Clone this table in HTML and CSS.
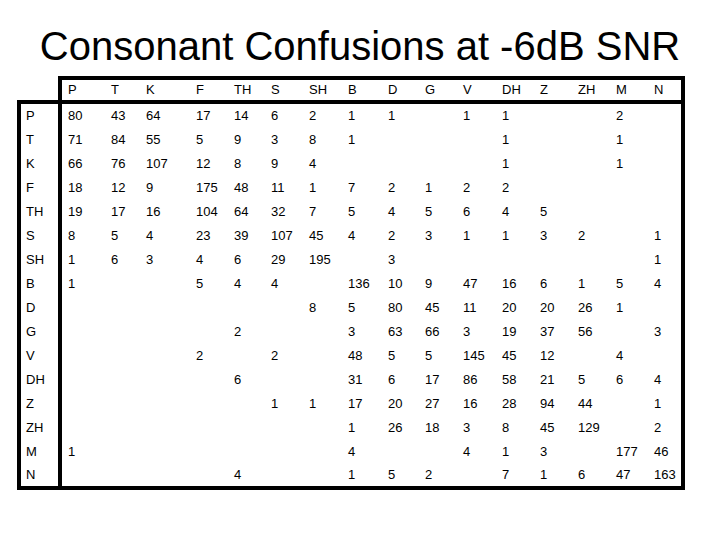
FILE: index.html
```html
<!DOCTYPE html>
<html lang="en">
<head>
<meta charset="utf-8">
<title>Consonant Confusions at -6dB SNR</title>
<link rel="stylesheet" href="styles.css">
</head>
<body>
<h1 class="title">Consonant Confusions at -6dB SNR</h1>
<table class="matrix">
<colgroup>
<col><col><col><col><col><col><col><col><col><col><col><col><col><col><col><col><col>
</colgroup>
<thead>
<tr><th class="corner"></th><th>P</th><th>T</th><th>K</th><th>F</th><th>TH</th><th>S</th><th>SH</th><th>B</th><th>D</th><th>G</th><th>V</th><th>DH</th><th>Z</th><th>ZH</th><th>M</th><th>N</th></tr>
</thead>
<tbody>
<tr><th>P</th><td>80</td><td>43</td><td>64</td><td>17</td><td>14</td><td>6</td><td>2</td><td>1</td><td>1</td><td></td><td>1</td><td>1</td><td></td><td></td><td>2</td><td></td></tr>
<tr><th>T</th><td>71</td><td>84</td><td>55</td><td>5</td><td>9</td><td>3</td><td>8</td><td>1</td><td></td><td></td><td></td><td>1</td><td></td><td></td><td>1</td><td></td></tr>
<tr><th>K</th><td>66</td><td>76</td><td>107</td><td>12</td><td>8</td><td>9</td><td>4</td><td></td><td></td><td></td><td></td><td>1</td><td></td><td></td><td>1</td><td></td></tr>
<tr><th>F</th><td>18</td><td>12</td><td>9</td><td>175</td><td>48</td><td>11</td><td>1</td><td>7</td><td>2</td><td>1</td><td>2</td><td>2</td><td></td><td></td><td></td><td></td></tr>
<tr><th>TH</th><td>19</td><td>17</td><td>16</td><td>104</td><td>64</td><td>32</td><td>7</td><td>5</td><td>4</td><td>5</td><td>6</td><td>4</td><td>5</td><td></td><td></td><td></td></tr>
<tr><th>S</th><td>8</td><td>5</td><td>4</td><td>23</td><td>39</td><td>107</td><td>45</td><td>4</td><td>2</td><td>3</td><td>1</td><td>1</td><td>3</td><td>2</td><td></td><td>1</td></tr>
<tr><th>SH</th><td>1</td><td>6</td><td>3</td><td>4</td><td>6</td><td>29</td><td>195</td><td></td><td>3</td><td></td><td></td><td></td><td></td><td></td><td></td><td>1</td></tr>
<tr><th>B</th><td>1</td><td></td><td></td><td>5</td><td>4</td><td>4</td><td></td><td>136</td><td>10</td><td>9</td><td>47</td><td>16</td><td>6</td><td>1</td><td>5</td><td>4</td></tr>
<tr><th>D</th><td></td><td></td><td></td><td></td><td></td><td></td><td>8</td><td>5</td><td>80</td><td>45</td><td>11</td><td>20</td><td>20</td><td>26</td><td>1</td><td></td></tr>
<tr><th>G</th><td></td><td></td><td></td><td></td><td>2</td><td></td><td></td><td>3</td><td>63</td><td>66</td><td>3</td><td>19</td><td>37</td><td>56</td><td></td><td>3</td></tr>
<tr><th>V</th><td></td><td></td><td></td><td>2</td><td></td><td>2</td><td></td><td>48</td><td>5</td><td>5</td><td>145</td><td>45</td><td>12</td><td></td><td>4</td><td></td></tr>
<tr><th>DH</th><td></td><td></td><td></td><td></td><td>6</td><td></td><td></td><td>31</td><td>6</td><td>17</td><td>86</td><td>58</td><td>21</td><td>5</td><td>6</td><td>4</td></tr>
<tr><th>Z</th><td></td><td></td><td></td><td></td><td></td><td>1</td><td>1</td><td>17</td><td>20</td><td>27</td><td>16</td><td>28</td><td>94</td><td>44</td><td></td><td>1</td></tr>
<tr><th>ZH</th><td></td><td></td><td></td><td></td><td></td><td></td><td></td><td>1</td><td>26</td><td>18</td><td>3</td><td>8</td><td>45</td><td>129</td><td></td><td>2</td></tr>
<tr><th>M</th><td>1</td><td></td><td></td><td></td><td></td><td></td><td></td><td>4</td><td></td><td></td><td>4</td><td>1</td><td>3</td><td></td><td>177</td><td>46</td></tr>
<tr><th>N</th><td></td><td></td><td></td><td></td><td>4</td><td></td><td></td><td>1</td><td>5</td><td>2</td><td></td><td>7</td><td>1</td><td>6</td><td>47</td><td>163</td></tr>
</tbody>
</table>
</body>
</html>
```
FILE: styles.css
```css
html, body {
  margin: 0;
  padding: 0;
  background: #ffffff;
}

body {
  width: 720px;
  height: 540px;
  font-family: "Liberation Sans", Arial, sans-serif;
  color: #000000;
}

.title {
  margin: 0;
  padding-top: 23px;
  font-size: 40px;
  line-height: 46px;
  font-weight: normal;
  text-align: center;
}

.matrix {
  margin: 7px 0 0 17px;
  width: 668px;
  table-layout: fixed;
  border-collapse: separate;
  border-spacing: 0;
  font-size: 13px;
}

.matrix col:nth-child(1)  { width: 45px; }
.matrix col:nth-child(2)  { width: 43px; }
.matrix col:nth-child(3)  { width: 35px; }
.matrix col:nth-child(4)  { width: 50px; }
.matrix col:nth-child(5)  { width: 38px; }
.matrix col:nth-child(6)  { width: 37px; }
.matrix col:nth-child(7)  { width: 38px; }
.matrix col:nth-child(8)  { width: 39px; }
.matrix col:nth-child(9)  { width: 40px; }
.matrix col:nth-child(10) { width: 37px; }
.matrix col:nth-child(11) { width: 38px; }
.matrix col:nth-child(12) { width: 39px; }
.matrix col:nth-child(13) { width: 38px; }
.matrix col:nth-child(14) { width: 38px; }
.matrix col:nth-child(15) { width: 38px; }
.matrix col:nth-child(16) { width: 38px; }
.matrix col:nth-child(17) { width: 37px; }

.matrix th,
.matrix td {
  padding: 0 0 0 6px;
  text-align: left;
  font-weight: normal;
  white-space: nowrap;
  vertical-align: middle;
}

.matrix thead th {
  line-height: 20px;
  border-top: 4px solid #000;
  border-bottom: 4px solid #000;
}

.matrix thead th.corner {
  border-top: 0;
  border-right: 4px solid #000;
}

.matrix thead th:last-child,
.matrix tbody td:last-child {
  border-right: 4px solid #000;
}

.matrix tbody th,
.matrix tbody td {
  line-height: 24px;
}

.matrix tbody th {
  padding-left: 5px;
  border-left: 4px solid #000;
  border-right: 4px solid #000;
}

.matrix tbody tr:last-child th,
.matrix tbody tr:last-child td {
  line-height: 22px;
  border-bottom: 4px solid #000;
}
```
